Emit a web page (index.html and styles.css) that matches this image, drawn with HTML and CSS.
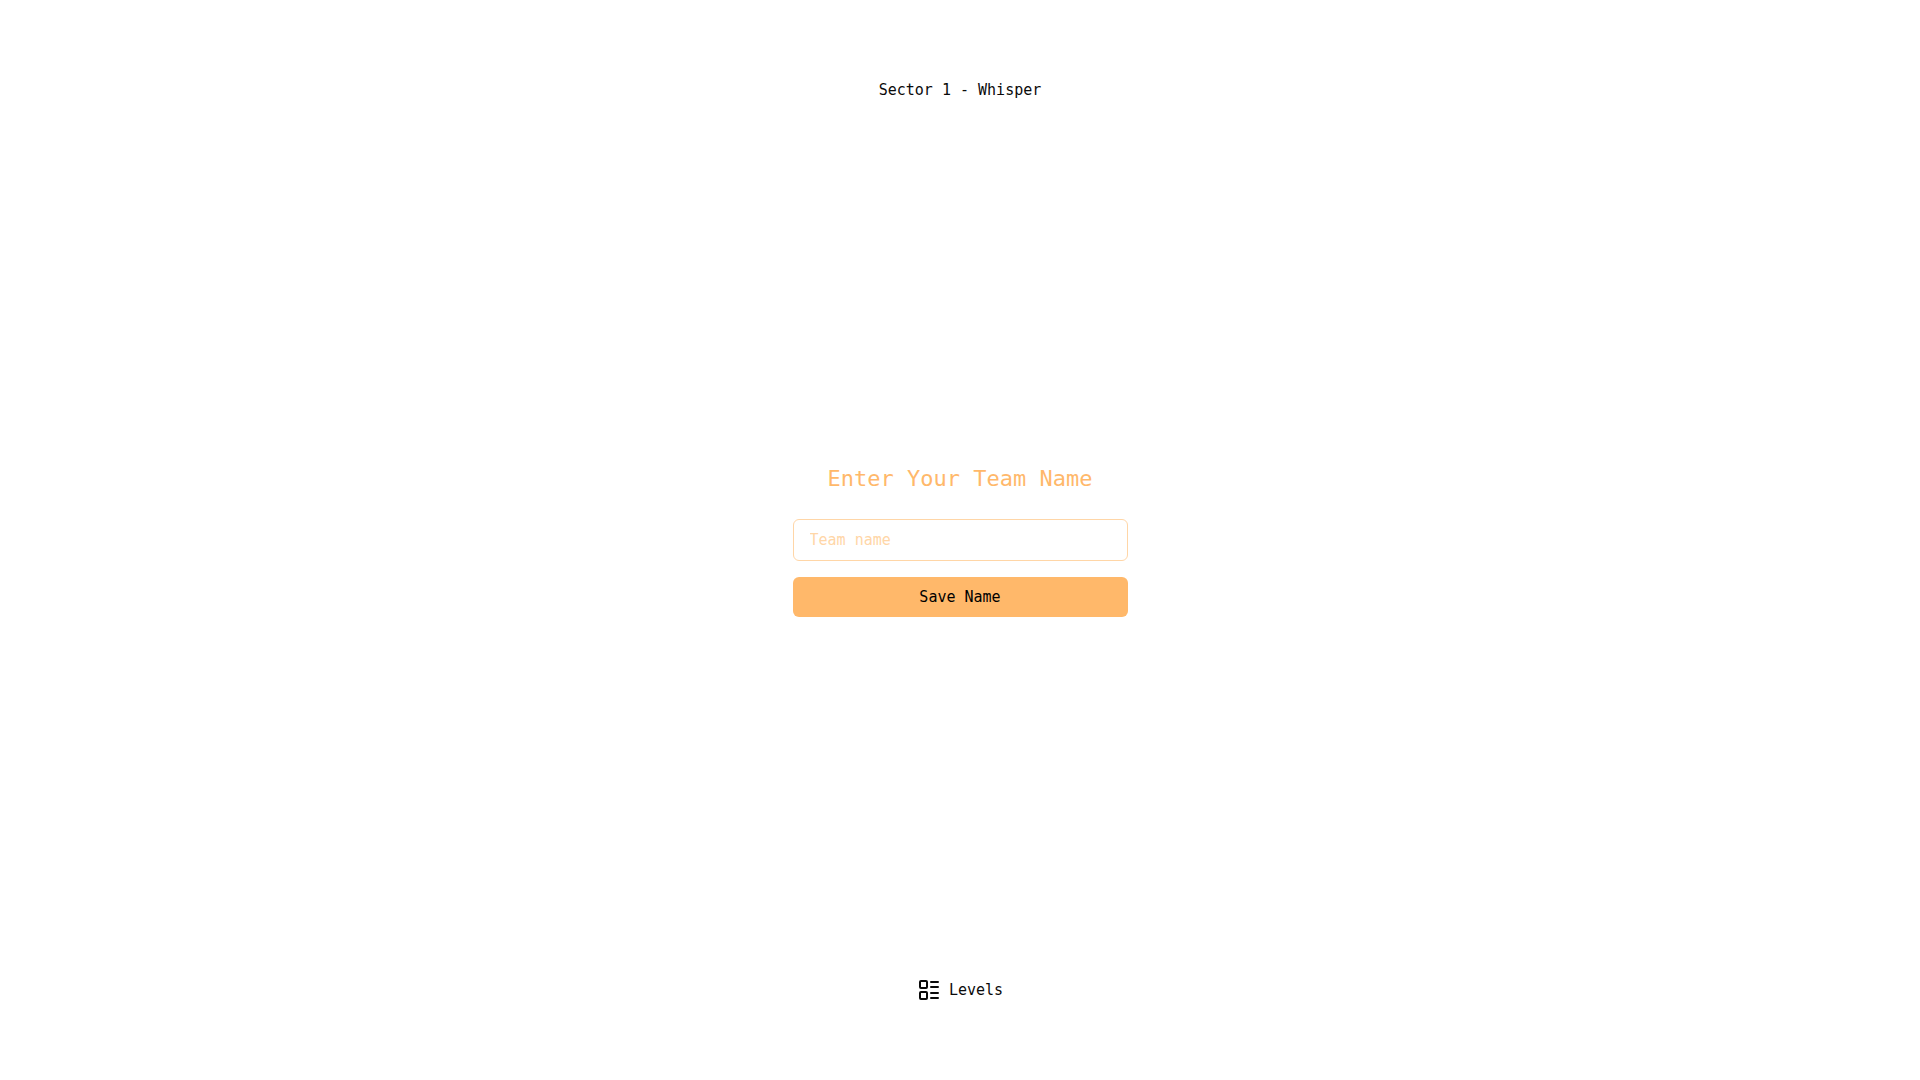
FILE: index.html
```html
<!DOCTYPE html>
<html lang="en">

<head>
  <meta charset="UTF-8" />
  <meta name="viewport" content="width=device-width, initial-scale=1.0" />
  <title>Sector 1 - Whisper</title>
  <link rel="stylesheet" href="styles.css">
</head>

<body>
  <header class="sector">Sector 1 - Whisper</header>

  <main class="team">
    <form class="team-form">
      <h1 class="team-title"><label for="teamName">Enter Your Team Name</label></h1>
      <input class="team-input" type="text" id="teamName" name="teamName" placeholder="Team name" />
      <button class="team-save" type="submit">Save Name</button>
    </form>
  </main>

  <footer>
    <button class="levels-btn" type="button">
      <svg class="levels-icon" viewBox="0 0 24 24" aria-hidden="true">
        <rect x="3" y="3" width="7" height="7" rx="1" />
        <rect x="3" y="14" width="7" height="7" rx="1" />
        <path d="M14 4h7M14 9h7M14 15h7M14 20h7" />
      </svg>
      Levels
    </button>
  </footer>
</body>

</html>
```

FILE: styles.css
```css
* {
  box-sizing: border-box;
}

body {
  min-height: 100vh;
  margin: 0;
  padding: 78px 16px;
  display: flex;
  flex-direction: column;
  align-items: center;
  background: #fff;
  color: #0a0a0a;
  font-family: "DejaVu Sans Mono", monospace;
  font-size: 15px;
  line-height: 24px;
}

input,
button {
  font: inherit;
}

/* Team name form */
.team {
  flex: 1;
  width: 100%;
  display: flex;
  justify-content: center;
  align-items: center;
}

.team-form {
  width: 100%;
  max-width: 335px;
  display: flex;
  flex-direction: column;
  gap: 16px;
}

.team-title {
  margin: 0 0 8px;
  color: #ffb86a;
  font-size: 22px;
  font-weight: 400;
  line-height: 32px;
  text-align: center;
}

.team-input {
  width: 100%;
  padding: 8px 16px;
  border: 1px solid #ffd6a7;
  border-radius: 6px;
  background: transparent;
  color: #ffb86a;
}

.team-input::placeholder {
  color: #ffd6a7;
  opacity: 1;
}

.team-save {
  padding: 8px 16px;
  border: none;
  border-radius: 6px;
  background: #ffb86a;
  color: #000;
  cursor: pointer;
}

.team-save:hover {
  background: #ffd6a7;
}

/* Levels menu button */
.levels-btn {
  padding: 0;
  display: flex;
  align-items: center;
  gap: 8px;
  border: none;
  background: none;
  color: inherit;
  cursor: pointer;
}

.levels-icon {
  width: 24px;
  height: 24px;
  fill: none;
  stroke: currentColor;
  stroke-width: 2;
  stroke-linecap: round;
  stroke-linejoin: round;
}
```
